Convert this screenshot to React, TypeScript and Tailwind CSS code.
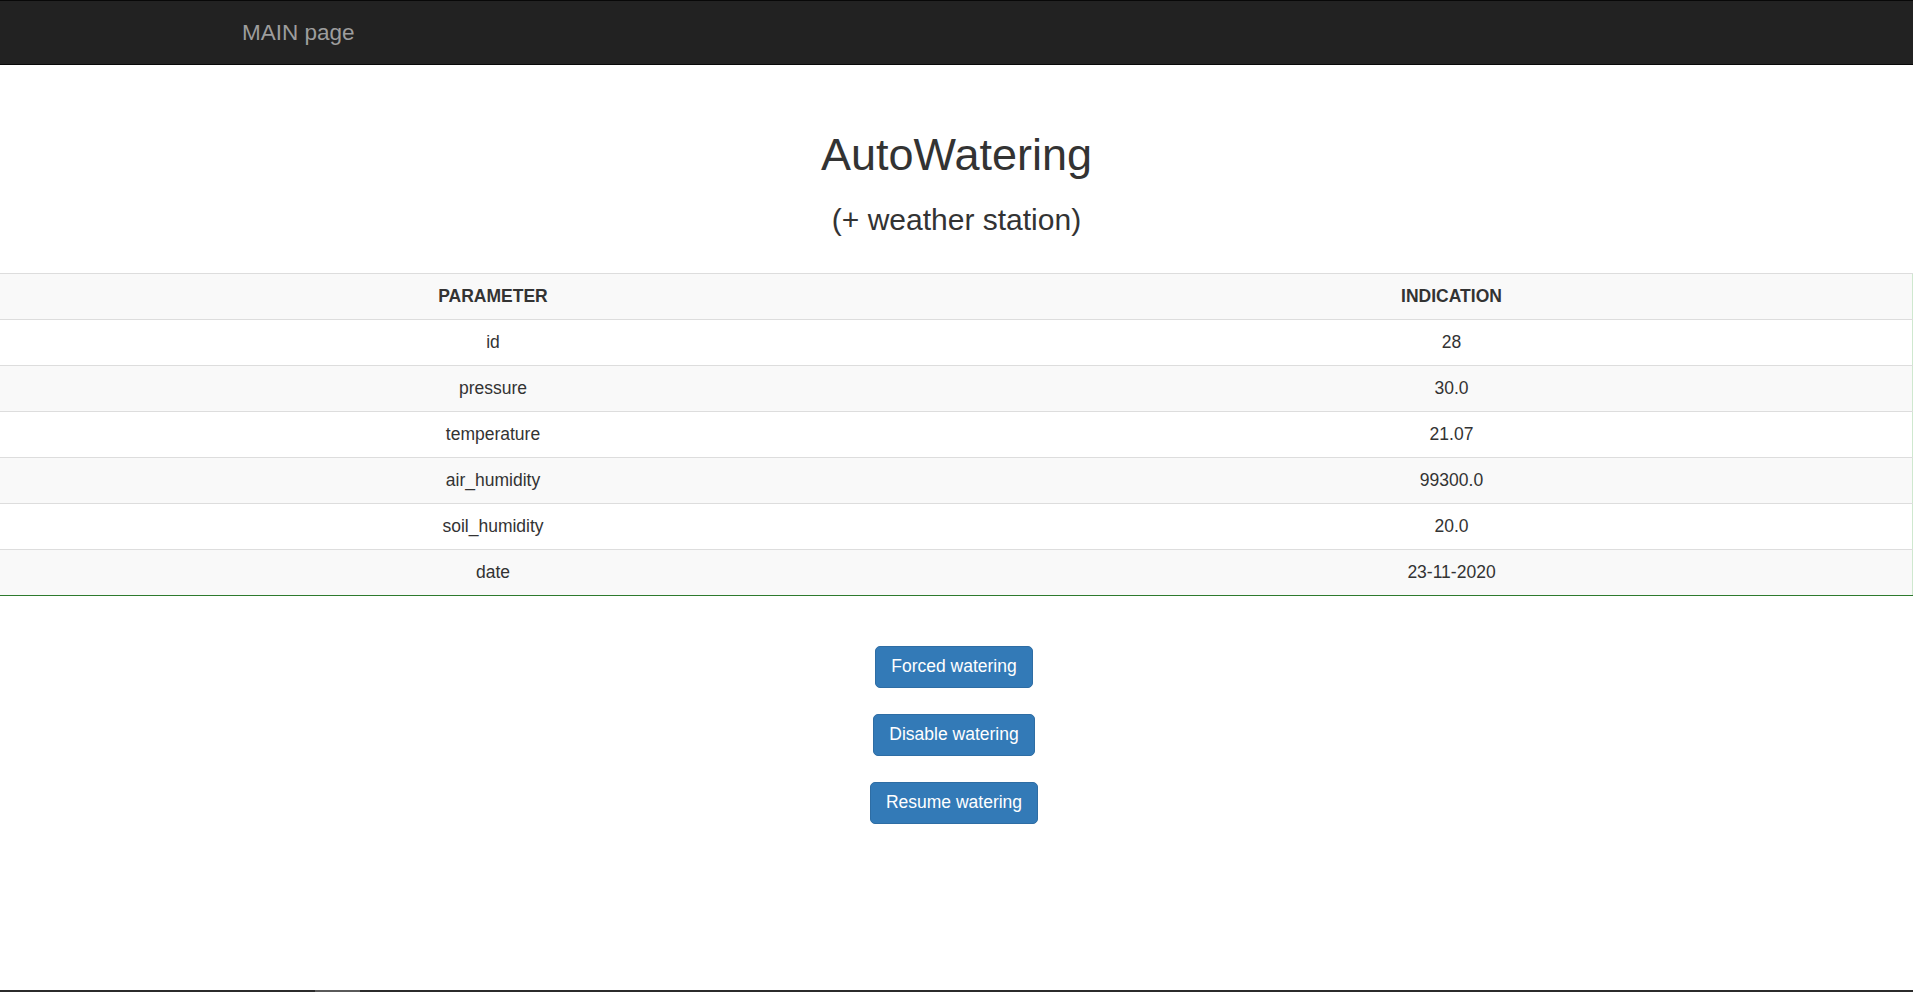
import React from "react";

const rows: [string, string][] = [
  ["id", "28"],
  ["pressure", "30.0"],
  ["temperature", "21.07"],
  ["air_humidity", "99300.0"],
  ["soil_humidity", "20.0"],
  ["date", "23-11-2020"],
];

export default function App() {
  return (
    <div
      className="h-[992px] w-full flex flex-col overflow-hidden bg-white text-[#333]"
      style={{ fontFamily: '"Liberation Sans", Arial, sans-serif' }}
    >
      <nav className="h-[65px] shrink-0 bg-[#222] border-t border-b border-[#080808] flex items-center">
        <span className="pl-[242px] text-[22.5px] leading-[25px] text-[#9d9d9d]">MAIN page</span>
      </nav>

      <h1 className="mt-[65px] text-center text-[45px] leading-[49.5px] font-normal">AutoWatering</h1>
      <h3 className="mt-[23px] text-center text-[30px] leading-[33px] font-normal">(+ weather station)</h3>

      <table className="mt-[37px] w-full table-fixed border-collapse border-r border-r-[#cfe8cf] text-[17.5px] leading-[25px]">
        <colgroup>
          <col className="w-[986px]" />
          <col />
        </colgroup>
        <thead>
          <tr className="bg-[#f9f9f9] border-t border-[#ddd]">
            <th className="py-[10px] text-center font-bold">PARAMETER</th>
            <th className="py-[10px] pl-[5px] text-center font-bold">INDICATION</th>
          </tr>
        </thead>
        <tbody>
          {rows.map(([k, v], i) => (
            <tr
              key={k}
              className={
                (i % 2 === 1 ? "bg-[#f9f9f9] " : "bg-white ") +
                "border-t border-[#ddd]" +
                (i === rows.length - 1 ? " border-b border-b-[#2d7a2d]" : "")
              }
            >
              <td className="py-[10px] text-center">{k}</td>
              <td className="py-[10px] pl-[5px] text-center">{v}</td>
            </tr>
          ))}
        </tbody>
      </table>

      <div className="mt-[50px] pr-[5px] flex flex-col items-center gap-[26px]">
        {["Forced watering", "Disable watering", "Resume watering"].map((t) => (
          <button
            key={t}
            className="px-[15px] py-[7.5px] text-[17.5px] leading-[25px] text-white bg-[#337ab7] border border-[#2e6da4] rounded-[5px]"
          >
            {t}
          </button>
        ))}
      </div>

      <div className="flex-1" />
      <div className="h-[2px] shrink-0 bg-[#2b2b2b] flex">
        <div className="ml-[315px] w-[45px] bg-[#5a5a5a]" />
      </div>
    </div>
  );
}
